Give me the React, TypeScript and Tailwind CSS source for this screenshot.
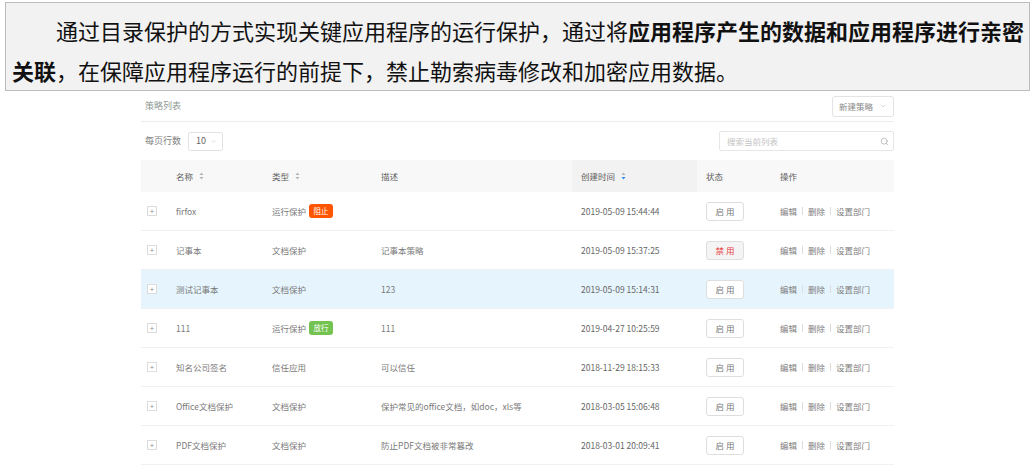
import { Search, ChevronDown } from 'lucide-react'

type Row = {
  name: string
  type: string
  tag?: 'block' | 'allow'
  desc: string
  time: string
  disabled?: boolean
  active?: boolean
}

const rows: Row[] = [
  { name: 'firfox', type: '运行保护', tag: 'block', desc: '', time: '2019-05-09 15:44:44' },
  { name: '记事本', type: '文档保护', desc: '记事本策略', time: '2019-05-09 15:37:25', disabled: true },
  { name: '测试记事本', type: '文档保护', desc: '123', time: '2019-05-09 15:14:31', active: true },
  { name: '111', type: '运行保护', tag: 'allow', desc: '111', time: '2019-04-27 10:25:59' },
  { name: '知名公司签名', type: '信任应用', desc: '可以信任', time: '2018-11-29 18:15:33' },
  { name: 'Office文档保护', type: '文档保护', desc: '保护常见的office文档，如doc，xls等', time: '2018-03-05 15:06:48' },
  { name: 'PDF文档保护', type: '文档保护', desc: '防止PDF文档被非常篡改', time: '2018-03-01 20:09:41' },
]

const cols = 'grid grid-cols-[35px_96px_109px_191px_125px_75px_122px]'

function SortIcon({ active = false }: { active?: boolean }) {
  return (
    <svg width="5" height="8" viewBox="0 0 5 8" className="ml-[6px]">
      <path d="M2.5 0.5 L4.5 3 L0.5 3 Z" fill="#b5b5b5" />
      <path d="M2.5 7.5 L4.5 5 L0.5 5 Z" fill={active ? '#2d8cf0' : '#b5b5b5'} />
    </svg>
  )
}

function Tag({ kind }: { kind: 'block' | 'allow' }) {
  return (
    <span
      className={
        'ml-[3px] inline-flex h-[14px] w-[24px] items-center justify-center rounded-[3px] text-[7.5px] text-white ' +
        (kind === 'block' ? 'bg-[#ff5500]' : 'bg-[#72c34f]')
      }
    >
      {kind === 'block' ? '阻止' : '放行'}
    </span>
  )
}

export default function App() {
  return (
    <div className="min-h-[475px] w-[1034px] bg-white" style={{ fontFamily: '"Noto Sans CJK SC", "Noto Sans", sans-serif' }}>
      <div className="ml-[5px] mt-[2px] h-[89px] w-[1025px] border border-[#bcbcbc] bg-[#f2f2f2] pl-[6px] pt-[7px] text-[22px] leading-[40px] text-[#111]">
        <div className="whitespace-nowrap pl-[44px]">
          通过目录保护的方式实现关键应用程序的运行保护，通过将<b className="font-bold">应用程序产生的数据和应用程序进行亲密</b>
        </div>
        <div className="whitespace-nowrap">
          <b className="font-bold">关联</b>，在保障应用程序运行的前提下，禁止勒索病毒修改和加密应用数据。
        </div>
      </div>

      <div className="ml-[141px] w-[753px] text-[8.5px] text-[#7a7a7a]">
        <div className="flex h-[31px] items-center justify-between border-b border-[#ececec]">
          <span className="pl-[4px] text-[9px] text-[#8f9a93]">策略列表</span>
          <button className="flex h-[21px] w-[62px] items-center justify-center gap-[6px] rounded-[3px] border border-[#e3e3e3] bg-white text-[8.5px] text-[#888]">
            新建策略 <ChevronDown size={8} strokeWidth={1.5} className="text-[#aaa]" />
          </button>
        </div>

        <div className="flex h-[38px] items-center justify-between">
          <div className="flex items-center pl-[4px]">
            <span className="text-[9px] text-[#808080]">每页行数</span>
            <div className="ml-[7px] flex h-[19px] w-[35px] items-center gap-[4px] rounded-[2px] border border-[#e3e3e3] pl-[7px] text-[9px] text-[#666]">
              10 <ChevronDown size={7} strokeWidth={1.5} className="text-[#bbb]" />
            </div>
          </div>
          <div className="flex h-[20px] w-[175px] items-center justify-between rounded-[2px] border border-[#e6e6e6] pl-[7px] pr-[4px] text-[8.5px] text-[#c3c3c3]">
            搜索当前列表
            <Search size={9} strokeWidth={1.5} className="text-[#999]" />
          </div>
        </div>

        <div className={cols + ' h-[32px] items-center bg-[#f8f8f8] text-[#606060]'}>
          <div />
          <div className="flex items-center">名称<SortIcon /></div>
          <div className="flex items-center">类型<SortIcon /></div>
          <div>描述</div>
          <div className="flex h-full items-center bg-[#f2f2f2] pl-[9px]">创建时间<SortIcon active /></div>
          <div className="pl-[9px]">状态</div>
          <div className="pl-[8px]">操作</div>
        </div>

        {rows.map(r => (
          <div
            key={r.name}
            className={cols + ' h-[39px] items-center border-b border-[#f0f0f0] ' + (r.active ? 'bg-[#e6f5fd]' : 'bg-white')}
          >
            <div className="pl-[6px]">
              <div className="flex h-[10px] w-[10px] items-center justify-center border border-[#dcdcdc] bg-white text-[7px] leading-none text-[#888]">+</div>
            </div>
            <div className="whitespace-nowrap">{r.name}</div>
            <div className="flex items-center whitespace-nowrap">
              {r.type}
              {r.tag && <Tag kind={r.tag} />}
            </div>
            <div className="whitespace-nowrap">{r.desc}</div>
            <div className="whitespace-nowrap pl-[9px] text-[#666]">{r.time}</div>
            <div className="pl-[9px]">
              <button
                className={
                  'flex h-[19px] w-[38px] items-center justify-center rounded-[3px] border border-[#dedede] text-[8.5px] tracking-[2px] ' +
                  (r.disabled ? 'bg-[#f4f4f4] text-[#e8383d]' : 'bg-white text-[#777]')
                }
              >
                <span className="pl-[2px]">{r.disabled ? '禁用' : '启用'}</span>
              </button>
            </div>
            <div className="flex items-center whitespace-nowrap pl-[8px] text-[#808080]">
              <span>编辑</span>
              <span className="mx-[5px] h-[8px] w-px bg-[#ddd]" />
              <span>删除</span>
              <span className="mx-[5px] h-[8px] w-px bg-[#ddd]" />
              <span>设置部门</span>
            </div>
          </div>
        ))}
      </div>
    </div>
  )
}
